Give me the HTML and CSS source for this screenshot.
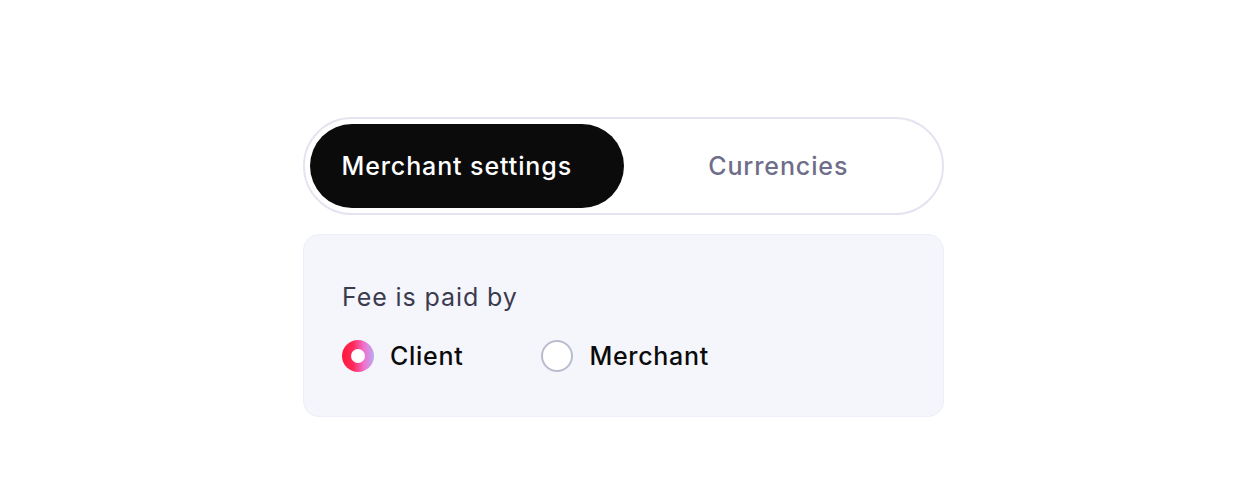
FILE: index.html
```html
<!DOCTYPE html>
<html lang="en">
<head>
    <meta charset="UTF-8">
    <meta name="viewport" content="width=device-width, initial-scale=1.0">
    <title>Settings</title>
    <link rel="stylesheet" href="styles.css">
</head>
<body>

<div class="panel">
    <div class="tabs">
        <button type="button" class="tab active">Merchant settings</button>
        <button type="button" class="tab">Currencies</button>
    </div>

    <div class="card">
        <div class="card-title">Fee is paid by</div>
        <div class="options">
            <label class="option">
                <input type="radio" name="fee" value="client" checked>
                <span class="dot"></span>
                Client
            </label>
            <label class="option">
                <input type="radio" name="fee" value="merchant">
                <span class="dot"></span>
                Merchant
            </label>
        </div>
    </div>
</div>

</body>
</html>
```

FILE: styles.css
```css
body {
    margin: 0;
    font-family: Inter, "Noto Sans", sans-serif;
    background: #fff;
}
.panel {
    width: 641px;
    margin: 117px auto 0;
    padding-right: 1px;
}
.tabs {
    display: grid;
    grid-template-columns: 1fr 1fr;
    height: 98px;
    box-sizing: border-box;
    padding: 5px;
    border: 2px solid #e4e4f1;
    border-radius: 49px;
}
.tab {
    border: none;
    background: none;
    border-radius: 42px;
    padding: 0 4px 0 0;
    font-family: inherit;
    font-size: 25px;
    font-weight: 500;
    letter-spacing: 0.9px;
    color: #6f6e8a;
    cursor: pointer;
}
.tab.active {
    background: #0b0b0b;
    color: #fff;
    padding-right: 20px;
}
.card {
    margin-top: 19px;
    height: 183px;
    box-sizing: border-box;
    padding: 47px 38px 0;
    background: #f5f6fc;
    border: 1px solid #eceef9;
    border-radius: 16px;
}
.card-title {
    font-size: 25px;
    line-height: 30px;
    color: #3b3b4f;
    letter-spacing: 0.9px;
}
.options {
    display: flex;
    gap: 78px;
    margin-top: 28px;
}
.option {
    display: flex;
    align-items: center;
    gap: 16px;
    font-size: 25px;
    font-weight: 500;
    letter-spacing: 0.7px;
    color: #0b0b0b;
    cursor: pointer;
}
.option input {
    display: none;
}
.dot {
    width: 32px;
    height: 32px;
    box-sizing: border-box;
    border-radius: 50%;
    border: 2px solid #b9bccd;
    background: #fff;
    display: flex;
    align-items: center;
    justify-content: center;
}
.option input:checked + .dot {
    border: none;
    background: linear-gradient(90deg, #ff1838 0%, #ff2a5a 35%, #f073d2 70%, #b9abf1 100%);
}
.option input:checked + .dot::after {
    content: "";
    width: 14px;
    height: 14px;
    border-radius: 50%;
    background: #fff;
}
```
